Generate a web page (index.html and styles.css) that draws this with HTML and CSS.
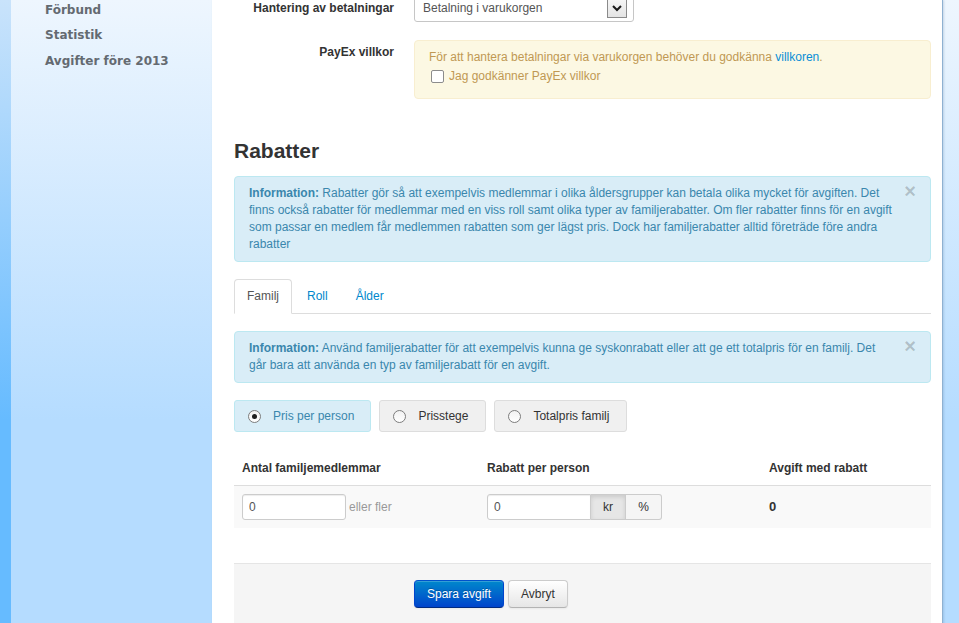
FILE: index.html
```html
<!DOCTYPE html>
<html lang="sv">
<head>
<meta charset="utf-8">
<title>Avgift</title>
<link rel="stylesheet" href="styles.css">
</head>
<body>
<div class="page">
  <div class="strip"></div>
  <aside class="sidebar">
    <ul class="nav">
      <li>Förbund</li>
      <li>Statistik</li>
      <li>Avgifter före 2013</li>
    </ul>
  </aside>
  <main class="main">
    <form class="form">
      <div class="row">
        <label class="row-label">Hantering av betalningar</label>
        <div class="controls">
          <div class="select">
            <span class="select-text">Betalning i varukorgen</span>
            <span class="select-btn">
              <svg width="18" height="18" viewBox="0 0 18 18"><path d="M5 7 L9 11 L13 7" fill="none" stroke="#1a1a1a" stroke-width="2"/></svg>
            </span>
          </div>
        </div>
      </div>
      <div class="row row-payex">
        <label class="row-label row-label-payex">PayEx villkor</label>
        <div class="controls">
          <div class="alert alert-warning">
            <div class="warn-line">För att hantera betalningar via varukorgen behöver du godkänna <a class="link" href="#">villkoren</a>.</div>
            <label class="check-line"><span class="checkbox"></span>Jag godkänner PayEx villkor</label>
          </div>
        </div>
      </div>

      <h3 class="title">Rabatter</h3>

      <div class="alert alert-info alert-first">
        <span class="close">×</span>
        <p class="alert-text"><strong>Information:</strong> Rabatter gör så att exempelvis medlemmar i olika åldersgrupper kan betala olika mycket för avgiften. Det finns också rabatter för medlemmar med en viss roll samt olika typer av familjerabatter. Om fler rabatter finns för en avgift som passar en medlem får medlemmen rabatten som ger lägst pris. Dock har familjerabatter alltid företräde före andra rabatter</p>
      </div>

      <ul class="tabs">
        <li><a class="tab tab-active" href="#">Familj</a></li>
        <li><a class="tab" href="#">Roll</a></li>
        <li><a class="tab" href="#">Ålder</a></li>
      </ul>

      <div class="alert alert-info">
        <span class="close">×</span>
        <p class="alert-text"><strong>Information:</strong> Använd familjerabatter för att exempelvis kunna ge syskonrabatt eller att ge ett totalpris för en familj. Det går bara att använda en typ av familjerabatt för en avgift.</p>
      </div>

      <div class="radios">
        <label class="radio-btn radio-active"><span class="radio radio-checked"></span>Pris per person</label>
        <label class="radio-btn"><span class="radio"></span>Prisstege</label>
        <label class="radio-btn"><span class="radio"></span>Totalpris familj</label>
      </div>

      <table class="table">
        <colgroup><col class="c1"><col class="c2"><col></colgroup>
        <thead>
          <tr><th>Antal familjemedlemmar</th><th>Rabatt per person</th><th>Avgift med rabatt</th></tr>
        </thead>
        <tbody>
          <tr>
            <td><input class="input" type="text" value="0"><span class="muted">eller fler</span></td>
            <td>
              <div class="input-group">
                <input class="input input-left" type="text" value="0">
                <span class="addon addon-active">kr</span>
                <span class="addon addon-last">%</span>
              </div>
            </td>
            <td class="total">0</td>
          </tr>
        </tbody>
      </table>

      <div class="actions">
        <button class="btn btn-primary" type="button">Spara avgift</button>
        <button class="btn" type="button">Avbryt</button>
      </div>
    </form>
  </main>
  <div class="right"></div>
</div>
</body>
</html>
```
FILE: styles.css
```css
* { box-sizing: border-box; }
html, body { margin: 0; height: 100%; }
body {
  font-family: "Liberation Sans", Arial, sans-serif;
  font-size: 12px;
  line-height: 17px;
  color: #333;
  background: linear-gradient(#eef6fe 0px, #b5dcff 420px) no-repeat;
  background-color: #b5dcff;
  overflow: hidden;
}
.page {
  display: grid;
  grid-template-columns: 11px 201px 731px 1fr;
  min-height: 100vh;
}
.strip { background: linear-gradient(#c9e3fb 0px, #66bbff 420px) no-repeat; background-color: #66bbff; }
.nav {
  list-style: none;
  margin: -2.5px 0 0;
  padding: 0 0 0 34px;
  font-family: "DejaVu Sans", Verdana, sans-serif;
  font-weight: bold;
  font-size: 12px;
  line-height: 25.5px;
  color: #646a71;
}
.main {
  background: #fff;
  border-right: 1px solid #8fb1d1;
  box-shadow: 1px 0 2px rgba(80, 120, 160, 0.25);
  padding: 0 11px 0 22px;
}
.form { margin-top: -6px; }
.row { display: flex; margin-bottom: 18px; }
.row-payex { margin-bottom: 39px; }
.row-label {
  width: 160px;
  margin-right: 20px;
  text-align: right;
  font-weight: bold;
  padding-top: 5px;
  line-height: 18px;
  flex: none;
}
.row-label-payex { padding-top: 3px; }
.controls { flex: 1; }
.select {
  width: 220px;
  height: 28px;
  border: 1px solid #c6c6c6;
  border-radius: 3px;
  display: flex;
  padding-left: 8px;
  color: #555;
}
.select-text { align-self: center; }
.select-btn {
  margin-left: auto;
  margin-right: 6px;
  margin-top: 3px;
  width: 20px;
  height: 20px;
  border: 1px solid #8a8a8a;
  background: linear-gradient(#f7f7f7, #e4e4e4);
  display: flex;
  align-items: center;
  justify-content: center;
}
.select-btn svg { display: block; }

.alert {
  position: relative;
  border: 1px solid;
  border-radius: 4px;
  padding: 8px 35px 8px 14px;
}
.alert-text { margin: 0; }
.alert-warning {
  background: #fcf8e3;
  border-color: #f8eed0;
  color: #c09853;
  padding-bottom: 13px;
}
.warn-line { line-height: 16px; }
.link { color: #0a8ed6; text-decoration: none; }
.check-line {
  display: flex;
  align-items: center;
  margin-top: 2px;
  height: 18px;
}
.checkbox {
  width: 13px;
  height: 13px;
  border: 1px solid #8c8c8c;
  border-radius: 2px;
  background: #fff;
  margin: 0 5px 0 2px;
}
.alert-info {
  background: #d9edf7;
  border-color: #bce8f1;
  color: #3a87ad;
  margin-bottom: 17px;
}
.close {
  position: absolute;
  top: 4px;
  right: 14px;
  font-size: 20px;
  font-weight: bold;
  line-height: 20px;
  color: rgba(0, 0, 0, 0.2);
}
.title {
  font-size: 21px;
  font-weight: bold;
  line-height: 26px;
  margin: 0 0 12px;
  color: #333;
}
.tabs {
  list-style: none;
  margin: 0 0 17px;
  padding: 0;
  display: flex;
  border-bottom: 1px solid #ddd;
}
.tab {
  display: block;
  padding: 8px 12px;
  line-height: 17px;
  border: 1px solid transparent;
  border-radius: 4px 4px 0 0;
  margin-right: 2px;
  margin-bottom: -1px;
  color: #0088cc;
  text-decoration: none;
}
.tab-active {
  background: #fff;
  border-color: #ddd #ddd transparent;
  color: #555;
}
.radios {
  display: flex;
  gap: 8px;
  margin-bottom: 19px;
}
.radio-btn {
  display: flex;
  align-items: center;
  gap: 12px;
  padding: 6px 17px 6px 13px;
  line-height: 18px;
  border: 1px solid #ddd;
  border-radius: 3px;
  background: #f0f0f0;
  color: #333;
}
.radio-active {
  background: #d9edf7;
  border-color: #bce8f1;
  color: #3a87ad;
  padding-right: 16px;
}
.radio {
  width: 13px;
  height: 13px;
  border-radius: 50%;
  border: 1px solid #7d7d7d;
  background: linear-gradient(#f2f2f2, #fff);
  display: flex;
  align-items: center;
  justify-content: center;
}
.radio-checked::after {
  content: "";
  width: 5px;
  height: 5px;
  border-radius: 50%;
  background: #1e1e1e;
}
.table {
  width: 100%;
  border-collapse: collapse;
  margin-bottom: 35px;
}
.c1 { width: 245px; }
.c2 { width: 282px; }
.table th {
  text-align: left;
  padding: 8px;
  line-height: 18px;
  border-bottom: 1px solid #ddd;
  font-weight: bold;
}
.table td {
  padding: 8px;
  background: #f9f9f9;
  vertical-align: middle;
  line-height: 18px;
}
.input {
  width: 104px;
  height: 26px;
  border: 1px solid #ccc;
  border-radius: 3px;
  padding: 0 6px;
  font: 12px "Liberation Sans", Arial, sans-serif;
  color: #555;
  background: #fff;
  box-shadow: inset 0 1px 1px rgba(0, 0, 0, 0.075);
  vertical-align: middle;
}
.muted { color: #999; margin-left: 3px; vertical-align: middle; }
.input-group { display: flex; }
.input-left { border-radius: 3px 0 0 3px; }
.addon {
  height: 26px;
  border: 1px solid #ccc;
  border-left: none;
  display: flex;
  align-items: center;
  justify-content: center;
  background: #f5f5f5;
  color: #333;
}
.addon-active {
  width: 35px;
  background: #e6e6e6;
  box-shadow: inset 0 2px 4px rgba(0, 0, 0, 0.12);
}
.addon-last {
  width: 36px;
  border-radius: 0 3px 3px 0;
}
.total { font-weight: bold; font-size: 13px; }
.actions {
  background: #f5f5f5;
  border-top: 1px solid #e5e5e5;
  padding: 16px 20px 60px 180px;
  display: flex;
  gap: 4px;
}
.btn {
  font: 12px "Liberation Sans", Arial, sans-serif;
  line-height: 18px;
  padding: 4px 12px;
  border-radius: 4px;
  border: 1px solid #ccc;
  border-bottom-color: #b3b3b3;
  background: linear-gradient(#fff, #e6e6e6);
  color: #333;
  box-shadow: inset 0 1px 0 rgba(255, 255, 255, 0.2), 0 1px 2px rgba(0, 0, 0, 0.05);
}
.btn-primary {
  color: #fff;
  background: linear-gradient(#0088cc, #0044cc);
  border-color: #0052cc #0044cc #002a80;
  text-shadow: 0 -1px 0 rgba(0, 0, 0, 0.25);
}
```
